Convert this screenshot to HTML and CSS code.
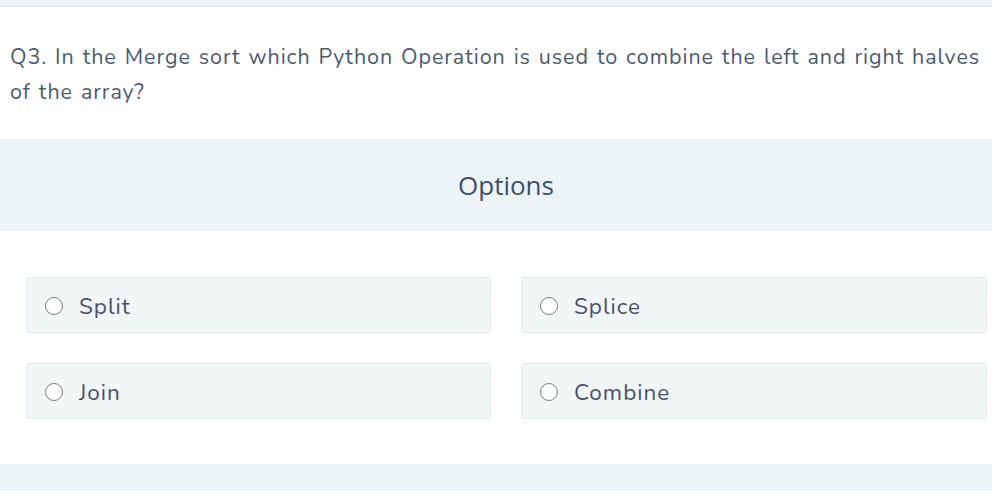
FILE: index.html
```html
<!DOCTYPE html>
<html lang="en">
<head>
<meta charset="utf-8">
<title>Question</title>
<link rel="stylesheet" href="styles.css">
</head>
<body>
<div class="topbar"></div>
<div class="question">Q3. In the Merge sort which Python Operation is used to combine the left and right halves of the array?</div>
<div class="options-head">Options</div>
<div class="options">
  <label class="option"><span class="radio"></span><span class="label">Split</span></label>
  <label class="option"><span class="radio"></span><span class="label">Splice</span></label>
  <label class="option"><span class="radio"></span><span class="label">Join</span></label>
  <label class="option"><span class="radio"></span><span class="label">Combine</span></label>
</div>
<div class="bottombar"></div>
</body>
</html>
```
FILE: styles.css
```css
html, body {
  margin: 0;
  padding: 0;
  background: #ffffff;
}
body {
  width: 992px;
  height: 498px;
  overflow: hidden;
  font-family: "Nunito", "Lato", "Noto Sans", sans-serif;
}
.topbar {
  height: 6px;
  background: #edf4f7;
  border-bottom: 1px solid #e2ebef;
}
.question {
  box-sizing: border-box;
  padding: 33px 6px 0 10px;
  height: 132px;
  font-size: 21.5px;
  line-height: 35px;
  color: #4b5c70;
  letter-spacing: 0.93px;
  word-spacing: 1.5px;
}
.options-head {
  height: 92px;
  background: #edf4f7;
  display: flex;
  align-items: center;
  justify-content: center;
  font-family: "Open Sans", "Noto Sans", sans-serif;
  font-size: 26px;
  color: #3e5068;
  padding-left: 20px;
  box-sizing: border-box;
}
.options {
  display: grid;
  grid-template-columns: 465px 466px;
  column-gap: 30px;
  row-gap: 30px;
  padding: 46px 0 0 26px;
}
.option {
  box-sizing: border-box;
  height: 56px;
  background: #f1f6f7;
  border: 1px solid #e4eaed;
  border-radius: 3px;
  display: flex;
  align-items: center;
  padding-left: 18px;
}
.radio {
  box-sizing: border-box;
  width: 18px;
  height: 18px;
  border: 1.5px solid #7a7e84;
  border-radius: 50%;
  background: #ffffff;
  flex: none;
  margin-top: 1px;
}
.label {
  margin-left: 16px;
  font-size: 22.5px;
  letter-spacing: 1px;
  color: #4b5068;
  padding-top: 2px;
}
.bottombar {
  margin-top: 45px;
  height: 27px;
  background: #edf4f7;
}
```
